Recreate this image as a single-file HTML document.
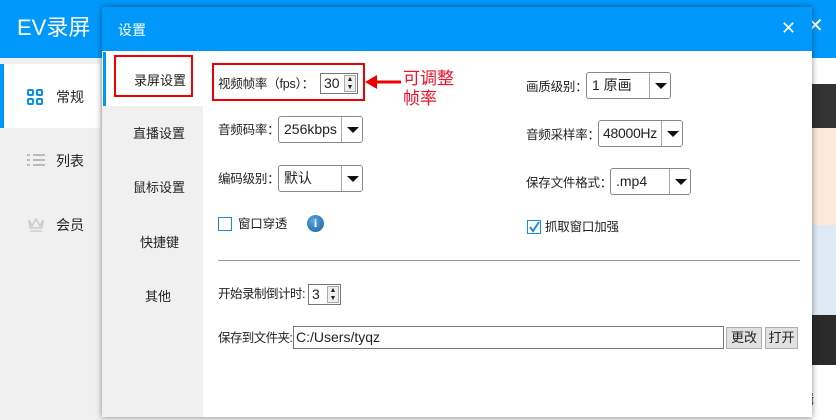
<!DOCTYPE html>
<html><head><meta charset="utf-8"><style>
*{margin:0;padding:0;box-sizing:border-box}
body{width:836px;height:420px;overflow:hidden;position:relative;background:#f0f0f0;font-family:"Liberation Sans","Noto Sans CJK SC",sans-serif;font-size:13px;line-height:16px;color:#222}
.a{position:absolute;white-space:nowrap}
.l{font-size:12.5px;letter-spacing:-0.2px}
.dd{position:absolute;border:1px solid #888;border-radius:3px;background:#fff;font-size:14px;padding-left:5px;line-height:24px;white-space:nowrap;overflow:hidden}
.dd i{position:absolute;right:0;top:0;bottom:0;width:21px;border-left:1px solid #aaa;background:#fff}
.dd i:after{content:"";position:absolute;left:5px;top:10px;border-left:6px solid transparent;border-right:6px solid transparent;border-top:6px solid #111}
.spin{position:absolute;border:1px solid #777;background:#fff;font-size:14px;padding-left:3px}
.spin b{position:absolute;right:1px;top:1px;bottom:1px;width:12px;border:1px solid #aaa;background:#eee;font-size:7px;line-height:8px;text-align:center;font-weight:normal}
.btn{position:absolute;background:#e1e1e1;border:1px solid #adadad;text-align:center;line-height:20px;font-size:13px}
</style></head><body>
<div class="a" style="left:0;top:0;width:836px;height:58px;background:#0099fb"></div>
<div class="a" style="left:17px;top:16px;color:#fff;font-size:22px;line-height:24px">EV录屏</div>
<div class="a" style="left:0;top:64px;width:100px;height:64px;background:#fff"></div>
<div class="a" style="left:0;top:64px;width:4px;height:64px;background:#0099fb"></div>
<div class="a" style="left:27px;top:89px;width:16px;height:16px">
<svg width="16" height="16"><g fill="none" stroke="#0a8ef0" stroke-width="2"><rect x="1" y="1" width="5" height="5" rx="1"/><rect x="10" y="1" width="5" height="5" rx="1"/><rect x="1" y="10" width="5" height="5" rx="1"/><rect x="10" y="10" width="5" height="5" rx="1"/></g></svg></div>
<div class="a" style="left:56px;top:89px;font-size:14px">常规</div>
<div class="a" style="left:27px;top:153px"><svg width="18" height="14"><g stroke="#bbb" stroke-width="2"><line x1="0" y1="2" x2="3" y2="2"/><line x1="6" y1="2" x2="18" y2="2"/><line x1="0" y1="7" x2="3" y2="7"/><line x1="6" y1="7" x2="18" y2="7"/><line x1="0" y1="12" x2="3" y2="12"/><line x1="6" y1="12" x2="18" y2="12"/></g></svg></div>
<div class="a" style="left:56px;top:153px;font-size:14px">列表</div>
<div class="a" style="left:27px;top:217px"><svg width="18" height="16"><path d="M2 3 L5 9 L9 2 L13 9 L16 3 L15 11 L3 11Z M3 14 H15" fill="none" stroke="#ccc" stroke-width="1.6"/></svg></div>
<div class="a" style="left:56px;top:217px;font-size:14px">会员</div>
<div class="a" style="left:812px;top:58px;width:24px;height:26px;background:#fff"></div>
<div class="a" style="left:812px;top:84px;width:24px;height:44px;background:#333"></div>
<div class="a" style="left:812px;top:128px;width:24px;height:97px;background:#fce9d9"></div>
<div class="a" style="left:812px;top:225px;width:24px;height:90px;background:#ddeaf4"></div>
<div class="a" style="left:812px;top:315px;width:24px;height:50px;background:#2a2a2a"></div>
<div class="a" style="left:812px;top:365px;width:24px;height:55px;background:#fff"></div>
<div class="a" style="left:801px;top:392px;font-size:13px">辑</div>
<div class="a" style="left:807px;top:18px;color:#fff;font-size:20px">✕</div>
<div class="a" style="left:102px;top:7px;width:710px;height:410px;background:#fff;box-shadow:0 0 6px rgba(0,0,0,.45)"></div>
<div class="a" style="left:102px;top:7px;width:710px;height:44px;background:#0099fb"></div>
<div class="a" style="left:118px;top:22px;color:#fff;font-size:14px">设置</div>
<div class="a" style="left:781px;top:20px;color:#fff;font-size:18px">✕</div>
<div class="a" style="left:102px;top:106px;width:101px;height:311px;background:#f0f0f0"></div>
<div class="a" style="left:103px;top:52px;width:3px;height:54px;background:#0099fb"></div>
<div class="a" style="left:114px;top:55px;width:79px;height:42px;border:2px solid #e00"></div>
<div class="a" style="left:134px;top:73px">录屏设置</div>
<div class="a" style="left:133px;top:126px">直播设置</div>
<div class="a" style="left:133px;top:180px">鼠标设置</div>
<div class="a" style="left:140px;top:235px">快捷键</div>
<div class="a" style="left:145px;top:289px">其他</div>
<div class="a" style="left:212px;top:63px;width:153px;height:38px;border:2px solid #e00"></div>
<div class="a l" style="left:218px;top:76px">视频帧率（fps）：</div>
<div class="spin" style="left:320px;top:73px;width:38px;height:21px;line-height:19px">30<b>▲<br>▼</b></div>
<div class="a" style="left:365px;top:75px"><svg width="38" height="14"><path d="M0 7 L12 0 L12 14Z" fill="#e00"/><line x1="10" y1="7" x2="36" y2="7" stroke="#e00" stroke-width="3"/></svg></div>
<div class="a" style="left:403px;top:69px;color:#f0102a;font-size:17px;line-height:20px">可调整<br>帧率</div>
<div class="a l" style="left:218px;top:122px">音频码率：</div>
<div class="dd" style="left:278px;top:116px;width:85px;height:27px">256kbps<i></i></div>
<div class="a l" style="left:218px;top:171px">编码级别：</div>
<div class="dd" style="left:278px;top:165px;width:85px;height:27px">默认<i></i></div>
<div class="a l" style="left:526px;top:79px">画质级别：</div>
<div class="dd" style="left:586px;top:72px;width:85px;height:27px">1 原画<i></i></div>
<div class="a l" style="left:526px;top:127px">音频采样率：</div>
<div class="dd" style="left:598px;top:120px;width:85px;height:27px;padding-left:4px;letter-spacing:-0.3px">48000Hz<i></i></div>
<div class="a l" style="left:526px;top:175px">保存文件格式：</div>
<div class="dd" style="left:610px;top:168px;width:81px;height:27px">.mp4<i></i></div>
<div class="a" style="left:218px;top:217px;width:14px;height:14px;border:1px solid #1a8ee0;background:#fff"></div>
<div class="a l" style="left:238px;top:216px">窗口穿透</div>
<div class="a" style="left:307px;top:215px;width:17px;height:17px;border-radius:50%;background:radial-gradient(circle at 40% 35%,#5aa7e0,#1a5f9c);color:#fff;font-size:12px;font-weight:bold;text-align:center;line-height:17px;font-family:'Liberation Serif',serif">i</div>
<div class="a" style="left:527px;top:220px;width:14px;height:14px;border:1px solid #1a8ee0;background:#fff"><svg width="12" height="12" style="position:absolute;left:0;top:0"><path d="M2 6 L5 10 L11 1" fill="none" stroke="#1a8ee0" stroke-width="2"/></svg></div>
<div class="a l" style="left:545px;top:219px">抓取窗口加强</div>
<div class="a" style="left:218px;top:260px;width:582px;height:1px;background:#999"></div>
<div class="a l" style="left:218px;top:286px;letter-spacing:-0.5px">开始录制倒计时:</div>
<div class="spin" style="left:308px;top:284px;width:33px;height:21px;line-height:19px">3<b>▲<br>▼</b></div>
<div class="a l" style="left:218px;top:330px;letter-spacing:-0.6px">保存到文件夹:</div>
<div class="a" style="left:293px;top:326px;width:431px;height:23px;border:1px solid #777;background:#fff;font-size:14px;line-height:21px;padding-left:2px">C:/Users/tyqz</div>
<div class="btn" style="left:726px;top:327px;width:36px;height:22px">更改</div>
<div class="btn" style="left:765px;top:327px;width:33px;height:22px">打开</div>
</body></html>
